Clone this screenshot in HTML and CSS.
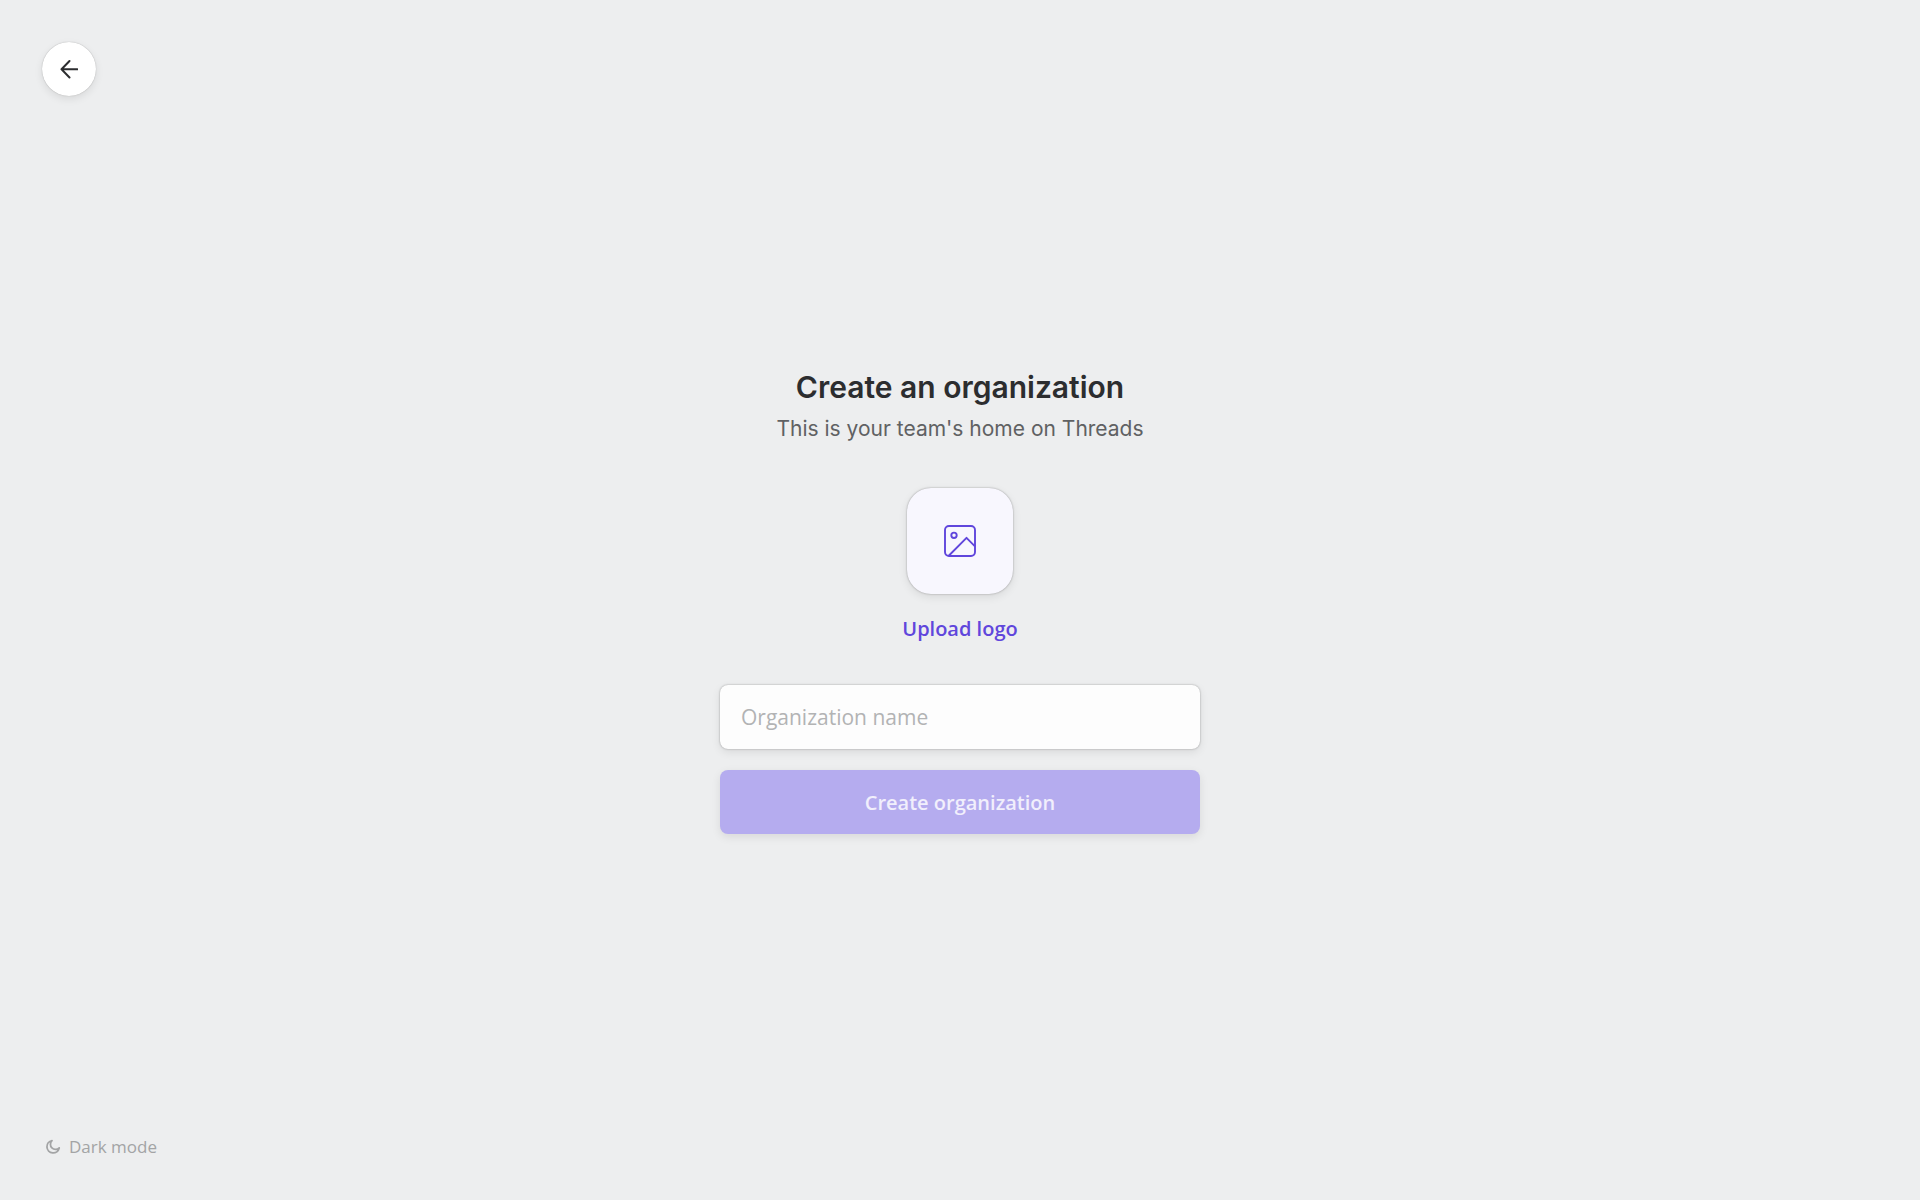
FILE: index.html
```
<!DOCTYPE html>
<html lang="en">
<head>
<meta charset="utf-8">
<meta name="viewport" content="width=device-width, initial-scale=1">
<title>Create an organization</title>
<link rel="stylesheet" href="styles.css">
</head>
<body>
<header class="top">
  <button class="back" type="button" aria-label="Back">
    <svg width="18" height="20" viewBox="0 0 18 20" fill="none" stroke="currentColor" stroke-width="2" stroke-linecap="round" stroke-linejoin="round"><path d="M17.500 10.300H1.500M9.500 2L1.500 10.300l8 8.200"/></svg>
  </button>
</header>
<main class="main">
  <h1 class="title">Create an organization</h1>
  <p class="subtitle">This is your team's home on Threads</p>
  <form class="form">
    <button class="upload" type="button">
      <span class="tile">
        <svg width="32" height="32" viewBox="0 0 32 32" fill="none" stroke="currentColor" stroke-width="1.900" stroke-linejoin="round"><rect x="1" y="1" width="30" height="30" rx="4"/><circle cx="10" cy="10.300" r="2.700"/><path d="M4.500 31L22.500 12.800L31 21.300"/></svg>
      </span>
      <span class="upload-label">Upload logo</span>
    </button>
    <input class="field" type="text" placeholder="Organization name" aria-label="Organization name">
    <button class="submit" type="submit" disabled>Create organization</button>
  </form>
</main>
<footer class="bottom">
  <button class="mode" type="button">
    <svg width="16" height="16" viewBox="0 0 16 16" fill="none" stroke="currentColor" stroke-width="1.800" stroke-linejoin="round"><path d="M7 1.600A6.200 6.200 0 1 0 14.200 9A4.800 4.800 0 0 1 7 1.600z"/></svg>
    <span>Dark mode</span>
  </button>
</footer>
</body>
</html>
```
FILE: styles.css
```
* { box-sizing: border-box; }
body {
  margin: 0;
  min-height: 100vh;
  display: flex;
  flex-direction: column;
  background: #edeeef;
  color: #2c2d2f;
  font-family: "Open Sans", sans-serif;
}
button, input { font: inherit; border: 0; }
svg { display: block; }
.top { flex: 1; padding: 42px 42px 0; }
.back {
  width: 54px;
  height: 54px;
  padding: 0;
  display: grid;
  place-items: center;
  border-radius: 50%;
  background: #fff;
  color: #2c2d2f;
  box-shadow: 0 0 1px rgba(0,0,0,.35), 0 3px 8px rgba(0,0,0,.09);
}
.main {
  display: flex;
  flex-direction: column;
  align-items: center;
  padding-bottom: 30px;
}
.title {
  margin: 0;
  font: 600 30px/40px Inter, sans-serif;
}
.subtitle {
  margin: 8px 0 0;
  font: 400 21px/28px Inter, sans-serif;
  color: #606163;
}
.form {
  width: 480px;
  max-width: 90%;
  margin-top: 45px;
  display: flex;
  flex-direction: column;
  align-items: center;
}
.upload {
  padding: 0;
  display: flex;
  flex-direction: column;
  align-items: center;
  gap: 21px;
  background: none;
  color: #6046dc;
}
.tile {
  width: 106px;
  height: 106px;
  display: grid;
  place-items: center;
  border-radius: 24px;
  background: #f8f7fe;
  box-shadow: 0 0 2px rgba(0,0,0,.35), 0 3px 10px rgba(0,0,0,.09);
}
.upload-label {
  font-size: 20px;
  line-height: 28px;
  font-weight: 600;
}
.field {
  width: 100%;
  height: 64px;
  margin: 42px 0 21px;
  padding: 0 21px;
  border-radius: 8px;
  background: #fdfdfd;
  font-size: 21px;
  box-shadow: 0 0 2px rgba(0,0,0,.35), 0 3px 10px rgba(0,0,0,.09);
}
.field::placeholder { color: #b2b3b4; opacity: 1; }
.submit {
  width: 100%;
  height: 64px;
  border-radius: 8px;
  background: #b5acef;
  color: #f1effc;
  font-size: 20px;
  font-weight: 600;
  box-shadow: 0 3px 10px rgba(0,0,0,.09);
}
.bottom {
  flex: 1;
  display: flex;
  align-items: flex-end;
  padding: 0 45px 41px;
}
.mode {
  padding: 0;
  display: flex;
  align-items: center;
  gap: 8px;
  background: none;
  color: #a3a4a5;
  font-size: 17px;
  line-height: 24px;
}
```
